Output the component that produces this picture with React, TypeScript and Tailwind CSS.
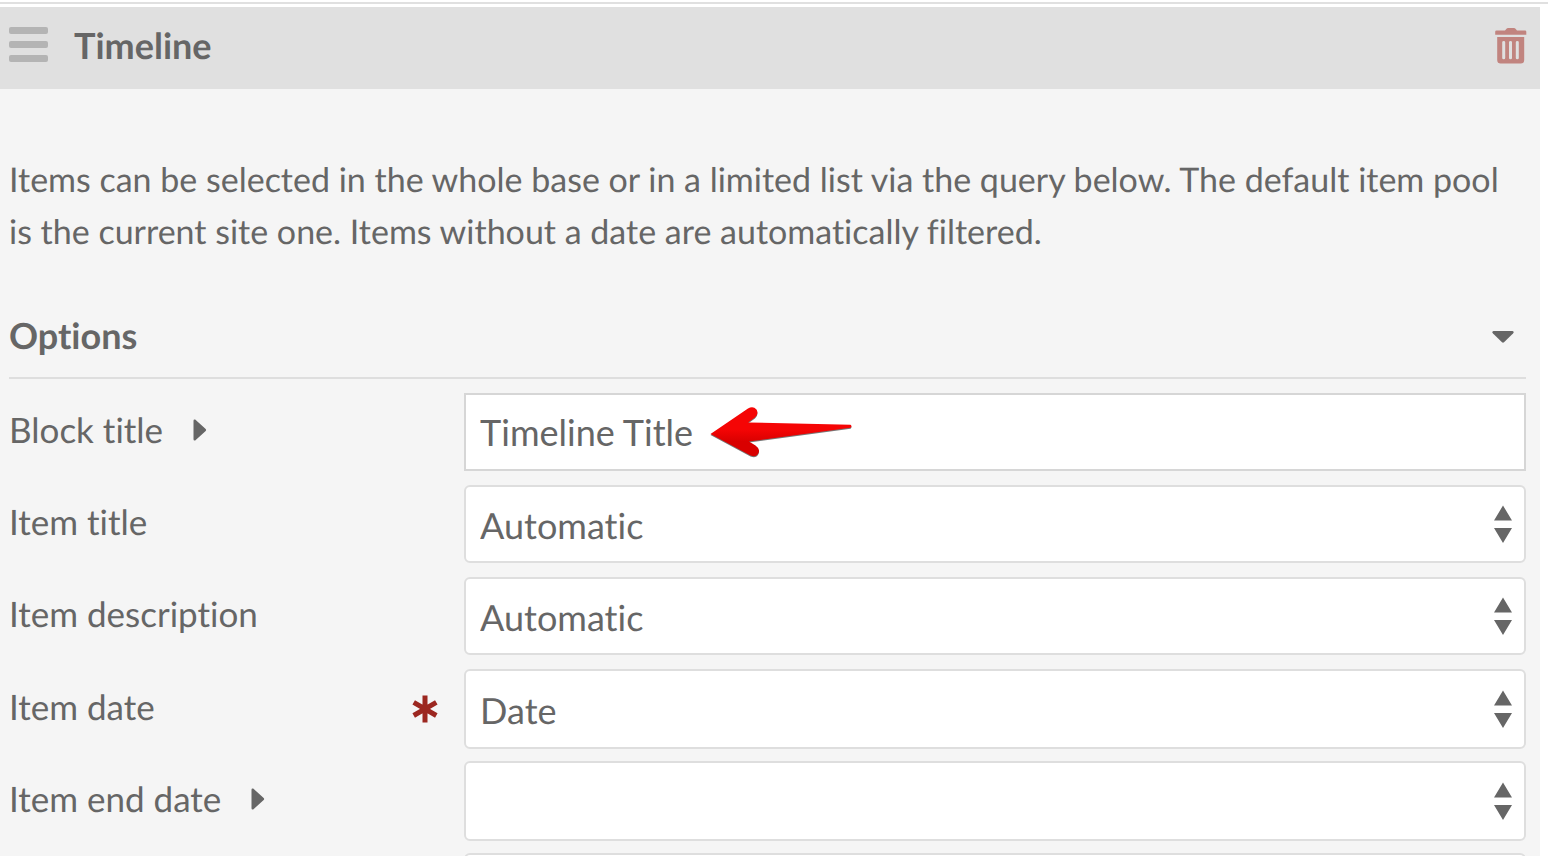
import { useState } from "react";

type Field = {
  id: string;
  label: string;
  kind: "text" | "select";
  value?: string;
  hint?: boolean;
  required?: boolean;
  tall?: boolean;
};

const fields: Field[] = [
  { id: "block-title", label: "Block title", kind: "text", value: "Timeline Title", hint: true },
  { id: "item-title", label: "Item title", kind: "select", value: "Automatic" },
  { id: "item-description", label: "Item description", kind: "select", value: "Automatic" },
  { id: "item-date", label: "Item date", kind: "select", value: "Date", required: true, tall: true },
  { id: "item-end-date", label: "Item end date", kind: "select", value: "", hint: true, tall: true },
  { id: "item-link", label: "", kind: "select", value: "", tall: true },
];

function TrashIcon() {
  return (
    <svg viewBox="0 0 32 36" className="h-9 w-8" aria-hidden="true">
      <path
        fill="#c1847f"
        fillRule="evenodd"
        d="M1.500 2.500H10L11.500.8Q12.100 0 13 0H19Q19.900 0 20.500.8L22 2.500H30Q31.300 2.500 31.300 3.700V6.800H.2V3.700Q.2 2.500 1.500 2.500ZM2.200 9H29.200V32Q29.200 35.500 25.700 35.500H5.700Q2.200 35.500 2.200 32ZM8.700 13Q7.200 13 7.200 14.200V30Q7.200 31.200 8.700 31.200T10.200 30V14.200Q10.200 13 8.700 13ZM15.500 13Q14 13 14 14.200V30Q14 31.200 15.500 31.200T17 30V14.200Q17 13 15.500 13ZM22.300 13Q20.800 13 20.800 14.200V30Q20.800 31.200 22.300 31.200T23.800 30V14.200Q23.800 13 22.300 13Z"
      />
    </svg>
  );
}

function CaretRight() {
  return (
    <svg viewBox="0 0 14 22" className="h-[22px] w-3.5" aria-hidden="true">
      <path fill="#666" d="M.5 1.800Q.5.200 2 .5Q2.600.7 3 1.200L12.700 10Q13.600 11 12.700 12L3 20.800Q2.600 21.300 2 21.500Q.5 21.800.5 20.200Z" />
    </svg>
  );
}

function CaretDown() {
  return (
    <svg viewBox="0 0 22 12" className="h-3 w-[22px]" aria-hidden="true">
      <path fill="#666" d="M1.500 0H20.500Q22 .3 21.600 1.600L21 2.400L12 11.300Q11 12.200 10 11.300L1 2.400L.4 1.600Q0 .3 1.500 0Z" />
    </svg>
  );
}

function SortArrows() {
  return (
    <svg
      viewBox="0 0 18 38"
      className="pointer-events-none absolute right-3.5 top-1/2 h-[38px] w-[18px] -translate-y-1/2"
      aria-hidden="true"
    >
      <path fill="#666" d="M9 .5L18 15.500H0ZM0 23H18L9 38Z" />
    </svg>
  );
}

function RequiredMark() {
  return (
    <svg viewBox="0 0 26 28" className="h-7 w-[26px]" role="img" aria-label="Required">
      <g stroke="#9c2720" strokeWidth="5" strokeLinecap="butt">
        <path d="M13 .5V27.500M1.700 7.300L24.300 20.500M24.300 7.300L1.700 20.500" />
      </g>
    </svg>
  );
}

function PointerArrow() {
  return (
    <svg
      viewBox="0 0 144 52"
      className="pointer-events-none absolute left-[245px] top-[13px] h-[52px] w-36"
      aria-hidden="true"
    >
      <defs>
        <linearGradient id="arrow-fill" x1="0" y1="0" x2="0" y2="1">
          <stop offset="0.45" stopColor="#f50505" />
          <stop offset="0.7" stopColor="#d90000" />
        </linearGradient>
      </defs>
      <path
        fill="#777"
        transform="translate(0 1)"
        d="M1.500 28L39 2.500Q44-.5 47.500 3.500Q50 8 46 11.500L39 16.500L141.500 18.700Q143.500 20.300 141.500 21.800L40 35.500L46.500 39.500Q51.500 43 49.500 47Q47 52 41.500 49.500Z"
      />
      <path
        fill="url(#arrow-fill)"
        d="M1.500 28L39 2.500Q44-.5 47.500 3.500Q50 8 46 11.500L39 16.500L141.500 18.700Q143.500 20.300 141.500 21.800L40 35.500L46.500 39.500Q51.500 43 49.500 47Q47 52 41.500 49.500Z"
      />
    </svg>
  );
}

function FieldRow({ field }: { field: Field }) {
  const [value, setValue] = useState(field.value ?? "");
  const height = field.tall ? "h-20" : "h-[78px]";

  return (
    <div className={`grid grid-cols-[3fr_7fr] items-center ${height}`}>
      <div className="flex items-center justify-between pr-[26px]">
        <div className="flex items-center gap-[30px] pb-1 text-[35px] leading-[52px]">
          <label htmlFor={field.id}>{field.label}</label>
          {field.hint && (
            <button type="button" aria-label={`Help for ${field.label}`}>
              <CaretRight />
            </button>
          )}
        </div>
        {field.required && <RequiredMark />}
      </div>
      <div className="relative h-full">
        {field.kind === "text" ? (
          <>
            <input
              id={field.id}
              type="text"
              value={value}
              onChange={(e) => setValue(e.target.value)}
              className="h-full w-full border-2 border-[#d6d6d6] bg-white px-3.5"
            />
            <PointerArrow />
          </>
        ) : (
          <>
            <select
              id={field.id}
              aria-label={field.label || "Item link"}
              value={value}
              onChange={(e) => setValue(e.target.value)}
              className="h-full w-full appearance-none rounded-md border-2 border-[#dedede] bg-white px-3.5 pt-0.5 [font-variant-ligatures:none] [text-rendering:geometricPrecision]"
            >
              <option value={field.value}>{field.value}</option>
            </select>
            <SortArrows />
          </>
        )}
      </div>
    </div>
  );
}

export default function App() {
  return (
    <main className="h-screen overflow-hidden bg-white pt-0.5 font-['Lato',sans-serif] text-[36px] leading-[52px] text-[#666] [font-variant-ligatures:none] [text-rendering:geometricPrecision]">
      <div className="h-0.5 bg-[#e0e0e0]" />
      <section className="mr-2 mt-[3px] bg-[#f5f5f5]">
        <header className="flex h-[82px] items-center bg-[#e0e0e0] pb-1.5 pl-[9px] pr-[13px]">
          <button type="button" aria-label="Move block" className="flex w-[39px] flex-col gap-[7px] pb-0.5">
            <span className="h-[7px] rounded-xs bg-[#b4b4b4]" />
            <span className="h-[7px] rounded-xs bg-[#b4b4b4]" />
            <span className="h-[7px] rounded-xs bg-[#b4b4b4]" />
          </button>
          <h1 className="ml-[26px] grow font-bold">Timeline</h1>
          <button type="button" aria-label="Delete block" className="pt-0.5">
            <TrashIcon />
          </button>
        </header>
        <div className="pl-[9px] pr-3.5 pt-[65px]">
          <p className="text-[34px] leading-[52px]">
            Items can be selected in the whole base or in a limited list via the query below. The default item pool is
            the current site one. Items without a date are automatically filtered.
          </p>
          <div className="mt-[51px] flex items-center justify-between border-b-2 border-[#dedede] pb-4 pr-3">
            <h2 className="font-bold">Options</h2>
            <button type="button" aria-label="Toggle options" className="pt-1">
              <CaretDown />
            </button>
          </div>
          <div className="mt-3.5 grid auto-rows-[92px]">
            {fields.map((field) => (
              <FieldRow key={field.id} field={field} />
            ))}
          </div>
        </div>
      </section>
    </main>
  );
}
